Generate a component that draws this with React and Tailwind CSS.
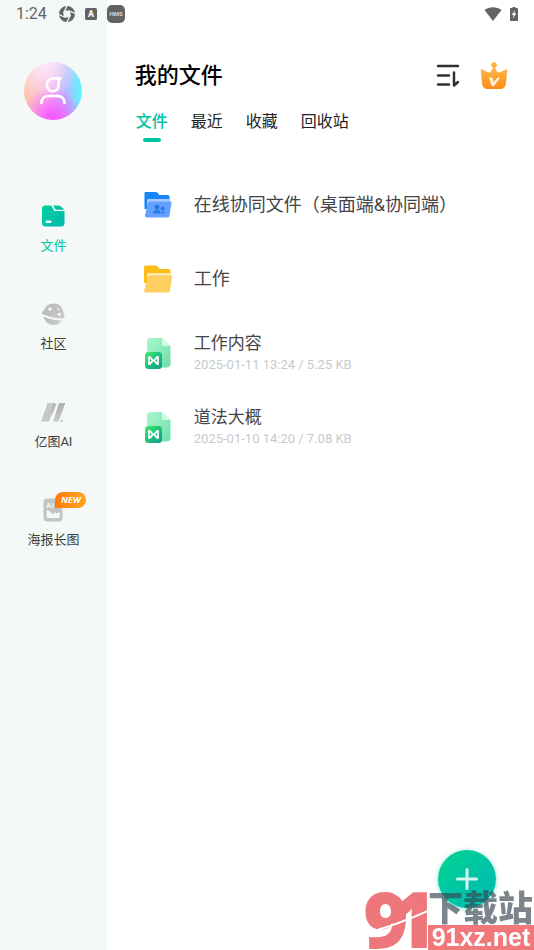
import React, { useState } from 'react';

const tabs = ['文件', '最近', '收藏', '回收站'];

const FilesIcon = () => (
    <svg className="w-6 h-6" viewBox="0 0 24 24">
        <defs>
            <linearGradient id="files" x1="0" y1="0" x2="1" y2="1">
                <stop offset="0" stopColor="#00d39a" />
                <stop offset="1" stopColor="#00b8b0" />
            </linearGradient>
        </defs>
        <path fill="url(#files)" d="M4 1.500h5c1 0 1.600.4 2 1.300l1.600 3c.4.800 1 1.200 2 1.200h8.900v12a3.500 3.500 0 0 1-3.500 3.500h-15.500A3.500 3.500 0 0 1 1 19V4.500a3 3 0 0 1 3-3Z" />
        <path fill="url(#files)" d="M12 1.500h6.500l5 4.200h-8.200c-.6 0-1-.3-1.300-.9Z" />
        <rect x="4.500" y="16.500" width="6" height="2.500" rx="1" fill="#fff" />
    </svg>
);

const CommunityIcon = () => (
    <svg className="w-6 h-6" viewBox="0 0 24 24">
        <defs>
            <linearGradient id="planet" x1="0" y1="0" x2="1" y2="1">
                <stop offset="0" stopColor="#b4b7b6" />
                <stop offset="1" stopColor="#cbcdcc" />
            </linearGradient>
        </defs>
        <path fill="url(#planet)" d="M3 8.500C4.200 4.500 8 1.500 12.500 1.500c5.200 0 9 3.500 9.800 8.200.2 1.400.2 2 1.100 4.300.6 1.800-.5 2.600-3 2.500C14 16.200 5.500 14 1.300 12 .4 11.300.7 10 3 8.500Z" />
        <path fill="url(#planet)" d="M2.500 14.500c5.500 2.600 11.500 4 18 4-2 3-4.800 4.500-8 4.500-4.900 0-8.800-3.400-10-8.500Z" />
        <circle cx="9" cy="7" r="1.700" fill="#f4f8f7" />
        <circle cx="17.300" cy="7" r=".9" fill="#f4f8f7" />
        <circle cx="18.300" cy="12.300" r="1.600" fill="#f4f8f7" />
    </svg>
);

const AiIcon = () => (
    <svg className="w-6 h-6" viewBox="0 0 24 24">
        <defs>
            <linearGradient id="ai" x1="0" y1="0" x2="0" y2="1">
                <stop offset="0" stopColor="#adb0af" />
                <stop offset="1" stopColor="#c9cbca" />
            </linearGradient>
        </defs>
        <path fill="#c6c8c7" d="M7 3h5.500l3 1-7 16c-.5 1.300-1 1.500-2 1.500H0L6 4.500C6.300 3.500 6.500 3 7 3Z" />
        <path fill="url(#ai)" d="M12.500 3c2 0 2.500 2 1.500 4.500l-2.500 7-2.500-3Z" />
        <path fill="url(#ai)" d="M19 3h5.500l-6.500 17c-.5 1.300-1 1.500-2 1.500h-4L17.500 4.500C18 3.300 18.300 3 19 3Z" />
        <path fill="#c0c3c2" d="M20.500 19 22 22h-3Z" />
    </svg>
);

const PosterIcon = () => (
    <svg className="w-6 h-6" viewBox="0 0 24 24">
        <rect x="2.500" y="0.500" width="19" height="23" rx="3.500" fill="#c1c4c3" />
        <text x="5" y="9.500" fontSize="8" fontWeight="700" fill="#f4f8f7" fontFamily="Roboto, sans-serif">AI</text>
        <path fill="#f4f8f7" d="M6.500 12c1.800 0 3.200 2.800 5.200 4.200 1-.8 1.500-2 2.500-1.700 1 .4 1.300 1.200 2 1 .9-.4 1.500-1.500 2.500-1v4c0 1-.5 1.500-1.500 1.500h-10c-1 0-1.500-.5-1.500-1.500V13c0-.6.300-1 .8-1Z" />
    </svg>
);

const SharedFolderIcon = () => (
    <svg className="w-7 h-7" viewBox="0 0 28 28">
        <path fill="#1684fc" d="M1.500 1h10c1 0 1.700.3 2.300 1l1.500 2H24a1.500 1.500 0 0 1 1.500 1.500V18H.500V2a1 1 0 0 1 1-1Z" />
        <path fill="#a9caff" d="M4.500 8H24c1 0 1.500.7 1.500 1.500V22H3V9.500C3 8.600 3.600 8 4.500 8Z" />
        <path fill="#659fff" d="M6.500 10.500h19.700c1 0 1.500.7 1.300 1.600l-2 12.400c-.2 1.400-1 2-2.300 2H3C1.500 26.500.8 25.500 1 24l2.800-11.500c.3-1.300 1.200-2 2.700-2Z" />
        <path fill="#277be4" d="M13 13.500a2.500 2.500 0 1 1 0 5 2.500 2.500 0 0 1 0-5Zm-4 9c0-2.500 1.500-3.500 4-3.500s4 1 4 3.500Zm9.500-7a2 2 0 1 1 0 4 2 2 0 0 1 0-4Zm-.5 4.500c1.700 0 2.800 1 2.800 2.500H18.500Z" />
    </svg>
);

const FolderIcon = () => (
    <svg className="w-7 h-7" viewBox="0 0 28 28">
        <path fill="#fdbd16" d="M1.500.5H11c1 0 1.700.3 2.300 1L16 4h9a1.500 1.500 0 0 1 1.500 1.500V18H0V2A1.500 1.500 0 0 1 1.500.5Z" />
        <path fill="#ffe7b3" d="M4.500 8H25c1 0 1.500.7 1.500 1.500V22H3V9.500C3 8.600 3.600 8 4.500 8Z" />
        <path fill="#ffcf61" d="M6.500 10.500h20c1.200 0 1.700.7 1.500 1.600L26 25.200c-.3 1.500-1 2.300-2.300 2.300H2C.7 27.500 0 26.500.2 25L3.800 12.500c.3-1.300 1.200-2 2.700-2Z" />
    </svg>
);

const MindIcon = () => (
    <svg className="w-7 h-8" viewBox="0 0 28 32">
        <defs>
            <linearGradient id="sheet" x1="0" y1="0" x2="1" y2="1">
                <stop offset="0" stopColor="#a9f9cc" />
                <stop offset="1" stopColor="#6fdcab" />
            </linearGradient>
            <linearGradient id="badge" x1="0" y1="0" x2="1" y2="1">
                <stop offset="0" stopColor="#43ec6c" />
                <stop offset=".5" stopColor="#1fc17a" />
                <stop offset="1" stopColor="#129a96" />
            </linearGradient>
        </defs>
        <path fill="url(#sheet)" d="M6 1h12l8.500 8v17.500a4 4 0 0 1-4 4H7a4 4 0 0 1-4-4V4a3 3 0 0 1 3-3Z" />
        <path fill="#d0fbe3" d="m18 1 8.500 8H20c-1.500 0-2-.7-2-2Z" />
        <rect x="1" y="15" width="17" height="17" rx="3.500" fill="url(#badge)" />
        <path fill="none" stroke="#fff" strokeWidth="1.800" strokeLinejoin="round" d="M5 19.800v7.400c2.600 0 2.200-3.700 4.500-3.700s1.900 3.700 4.500 3.700v-7.400c-2.600 0-2.200 3.700-4.500 3.700S7.600 19.800 5 19.800Z" />
    </svg>
);

const navItems = [
    { label: '文件', icon: FilesIcon },
    { label: '社区', icon: CommunityIcon },
    { label: '亿图AI', icon: AiIcon },
    { label: '海报长图', icon: PosterIcon, badge: 'NEW' },
];

const files = [
    { name: '在线协同文件（桌面端&协同端）', icon: SharedFolderIcon },
    { name: '工作', icon: FolderIcon },
    { name: '工作内容', icon: MindIcon, meta: '2025-01-11 13:24 / 5.25 KB' },
    { name: '道法大概', icon: MindIcon, meta: '2025-01-10 14:20 / 7.08 KB' },
];

const StatusBar = () => (
    <div className="absolute inset-x-0 top-0 h-7 px-4 flex items-center text-[#626464]">
        <span className="w-[43px] text-base">1:24</span>
        <svg className="w-4 h-4" viewBox="0 0 16 16">
            <circle cx="8" cy="8" r="5.800" fill="none" stroke="#626464" strokeWidth="4.400" />
            <path stroke="#f4f8f7" strokeWidth="1.300" d="M4.500 7 8 0M9.500 4.500 16 7.500M11.500 9 8 16M6.500 11.500 0 8.500" />
        </svg>
        <svg className="w-3 h-3 ml-[10px]" viewBox="0 0 12 12">
            <rect width="12" height="12" rx="1.500" fill="#626464" />
            <text x="6" y="9" fontSize="9" fontWeight="700" textAnchor="middle" fill="#fff">A</text>
        </svg>
        <svg className="w-[18px] h-[18px] ml-[10px]" viewBox="0 0 18 18">
            <rect width="18" height="18" rx="5" fill="#626464" />
            <text x="9" y="11" fontSize="6" fontWeight="700" textAnchor="middle" fill="#d8dada">HMS</text>
        </svg>
        <svg className="w-[18px] h-[14px] ml-auto" viewBox="0 0 18 14">
            <path fill="#626464" d="M.5 3C5.500-.8 12.500-.8 17.500 3L9 14Z" />
        </svg>
        <svg className="w-2 h-[14px] ml-2" viewBox="0 0 8 14">
            <path fill="#626464" d="M2.500 0h3v1H7a1 1 0 0 1 1 1v12H0V2a1 1 0 0 1 1-1h1.500Z" />
            <path fill="#fff" d="M5 3 1.800 8h2L3 11.500 6.300 6.500h-2Z" />
        </svg>
    </div>
);

const Sidebar = ({ active, onSelect }) => (
    <aside className="w-1/5 shrink-0 bg-[#f4f8f7] pt-[62px] flex flex-col items-center">
        <button
            aria-label="Profile"
            className="w-[58px] h-[58px] rounded-full flex items-center justify-center bg-[radial-gradient(circle_at_50%_100%,#f45cff_8%,#f45cff00_50%),radial-gradient(circle_at_35%_0%,#faeaf6_5%,#faeaf600_55%),linear-gradient(90deg,#ffc8a8_0%,#f7b4ee_45%,#b4b8ff_72%,#5ff4ff_97%)]"
        >
            <svg className="w-7 h-7" viewBox="0 0 28 28" fill="none" stroke="#fff" strokeWidth="2.500">
                <path d="M21 1.500H13.500A5.500 5.500 0 0 0 8 7v1.500a5.800 5.800 0 0 0 11.600 0V3.500Z" />
                <path d="M2.500 27v-1.500a6.500 6.500 0 0 1 6.500-6.500h10a6.500 6.500 0 0 1 6.500 6.500V27" />
            </svg>
        </button>
        <nav className="mt-[84px] flex flex-col items-center gap-[46px]">
            {navItems.map(({ label, icon: Icon, badge }, i) => (
                <button
                    key={label}
                    onClick={() => onSelect(i)}
                    className={`relative h-[52px] flex flex-col items-center gap-2 text-[13px] leading-5 ${active === i ? 'text-[#00c99c]' : 'text-[#3d3f3f]'}`}
                >
                    <Icon />
                    {label}
                    {badge && (
                        <span className="absolute left-7 -top-[6px] w-[31px] h-4 rounded-t-full rounded-br-full bg-linear-to-r from-[#ff7a0c] to-[#ffa51f] text-white text-[9px] leading-4 font-bold italic font-['Open_Sans',sans-serif]">
                            {badge}
                        </span>
                    )}
                </button>
            ))}
        </nav>
    </aside>
);

const Watermark = () => (
    <div className="fixed right-0 bottom-0 flex items-end pointer-events-none font-['Liberation_Sans','Noto_Sans_CJK_SC',sans-serif]">
        <svg className="w-[64px] h-[60px]" viewBox="0 0 64 60" fontFamily="'Open Sans', sans-serif" fontWeight="800" fontSize="78" fill="#ee777b">
            <text x="-1" y="58">9</text>
            <text x="27" y="58">1</text>
            <path d="M10 41C28 36 46 29 64 21" stroke="#fff" strokeWidth="2" fill="none" />
        </svg>
        <div className="w-[106px]">
            <div className="h-8 text-[35px] leading-8 font-black whitespace-nowrap text-[#364450]/65">下载站</div>
            <div className="h-[25px] bg-[#f0777a] text-white text-center text-[25px] leading-[25px] font-bold">91xz.net</div>
        </div>
    </div>
);

const App = () => {
    const [activeNav, setActiveNav] = useState(0);
    const [activeTab, setActiveTab] = useState('文件');

    return (
        <div className="relative min-h-screen flex bg-white font-[Roboto,'Noto_Sans_CJK_SC',sans-serif]">
            <Sidebar active={activeNav} onSelect={setActiveNav} />

            <main className="flex-1 min-w-0 pt-[60px] pl-7 pr-[26px]">
                <header className="h-8 flex items-center">
                    <h1 className="text-[22px] leading-8 font-medium text-black">我的文件</h1>
                    <button aria-label="Sort" className="ml-auto">
                        <svg className="w-6 h-6" viewBox="0 0 24 24" fill="none" stroke="#303033" strokeWidth="2.500" strokeLinecap="round" strokeLinejoin="round">
                            <path d="M2 2h20M2 11.500h11M2 20.500h11M18 8.500v13l4-3.500" />
                        </svg>
                    </button>
                    <button aria-label="VIP" className="ml-5">
                        <svg className="w-7 h-7" viewBox="0 0 28 28">
                            <defs>
                                <linearGradient id="crown" x1="0" y1="0" x2="0" y2="1">
                                    <stop offset="0" stopColor="#ffbe59" />
                                    <stop offset="1" stopColor="#ff8b12" />
                                </linearGradient>
                            </defs>
                            <path fill="url(#crown)" d="M14 2.500C15.500 7 17 10.500 19 10.500c2 0 4.500-2.200 7-3.200 1-.3 1.400.3 1.200 1.200L26 21c-.4 4-2.500 6-6 6H8c-3.500 0-5.600-2-6-6L.8 8.500C.6 7.600 1 7 2 7.300c2.500 1 5 3.200 7 3.200s3.500-3.500 5-8Z" />
                            <circle cx="14" cy="3" r="2.800" fill="#ffb03c" />
                            <path fill="#fff0d8" d="M9 15.500h3.500l1.200 4.500 4-4.500H20l-5.500 8c-1.200 1.500-2.800 1.400-3.300-.4Z" />
                        </svg>
                    </button>
                </header>

                <div className="mt-[18px] flex gap-[23px]">
                    {tabs.map(tab => (
                        <button
                            key={tab}
                            onClick={() => setActiveTab(tab)}
                            className={`first:ml-px flex flex-col items-center text-base leading-6 ${activeTab === tab ? 'text-[#00c4a1] font-medium' : 'text-[#222224]'}`}
                        >
                            {tab}
                            {activeTab === tab && <span className="w-[18px] h-1 mt-1 rounded-full bg-[#00c4a1]" />}
                        </button>
                    ))}
                </div>

                <ul className="mt-[26px] pl-[9px]">
                    {files.map(({ name, icon: Icon, meta }) => (
                        <li key={name}>
                            <button className="w-full h-[74px] flex items-center gap-[22px] text-left whitespace-nowrap">
                                <Icon />
                                <span>
                                    <span className={`block leading-6 text-[#444446] ${meta ? 'text-[17px]' : 'text-[18px]'}`}>{name}</span>
                                    {meta && <span className="block text-[13px] leading-5 text-[#c9c9cb]">{meta}</span>}
                                </span>
                            </button>
                        </li>
                    ))}
                </ul>
            </main>

            <button
                aria-label="New file"
                className="fixed right-[38px] bottom-[42px] w-[58px] h-[58px] rounded-full flex items-center justify-center bg-linear-to-br from-[#05d38f] to-[#00b9b5] shadow-[0_1px_5px_#00c4a180]"
            >
                <svg className="w-6 h-6" viewBox="0 0 24 24" fill="none" stroke="#d5f7ef" strokeWidth="3" strokeLinecap="round">
                    <path d="M12 2.500v19M2.500 12h19" />
                </svg>
            </button>

            <Watermark />
            <StatusBar />
        </div>
    );
};

export default App;
